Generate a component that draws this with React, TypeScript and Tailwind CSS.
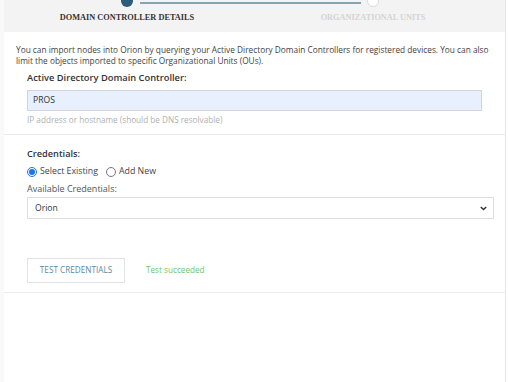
import React from "react";

const sans = { fontFamily: '"Open Sans", "Noto Sans", sans-serif' };

function Radio({ checked }: { checked: boolean }) {
  return checked ? (
    <span className="shrink-0 w-[10px] h-[10px] rounded-full border border-[#1a73e8] flex items-center justify-center bg-white">
      <span className="w-[6px] h-[6px] rounded-full bg-[#1a73e8]" />
    </span>
  ) : (
    <span className="shrink-0 block w-[10px] h-[10px] rounded-full border border-[#767676] bg-white" />
  );
}

export default function App() {
  return (
    <div className="w-[510px] h-[382px] bg-white flex overflow-hidden" style={sans}>
      <div className="w-[4px] bg-[#f9f9f9]" />
      <div className="w-[501px] flex flex-col">
        {/* Stepper header */}
        <div className="h-[32px] bg-[#f3f3f3] relative flex flex-col">
          <div className="absolute left-[136px] top-[2px] w-[221px] h-[2px] bg-[#86a4b8]" />
          <div className="grid grid-cols-[246px_246px] mt-[-5px]">
            <div className="flex justify-center">
              <span className="w-[12px] h-[12px] rounded-full bg-[#2b5c7d] relative" />
            </div>
            <div className="flex justify-center">
              <span className="w-[12px] h-[12px] rounded-full bg-white border border-[#dcdcdc] relative" />
            </div>
          </div>
          <div
            className="grid grid-cols-[246px_246px] mt-[6px] text-[8.3px] leading-[10px] font-bold uppercase"
            style={{ fontFamily: '"Liberation Serif", serif' }}
          >
            <div className="text-center text-[#333]">Domain Controller Details</div>
            <div className="text-center text-[#d4d4d4]">Organizational Units</div>
          </div>
        </div>

        {/* Intro + DC */}
        <div className="px-[12px] pt-[12px]">
          <p className="text-[8.3px] leading-[11px] text-[#3f3f3f]">
            You can import nodes into Orion by querying your Active Directory Domain Controllers for registered devices. You can also limit the objects imported to specific Organizational Units (OUs).
          </p>
          <div className="pl-[11px] pr-[11px] pt-[4px]">
            <div className="text-[9.3px] leading-[16px] font-semibold text-[#333]">
              Active Directory Domain Controller:
            </div>
            <div className="mt-[4px] h-[21px] border border-[#d4d4d4] bg-[#e8f0fe] flex items-center px-[5px] text-[8.6px] text-[#333]">
              PROS
            </div>
            <div className="mt-[3px] text-[8.2px] leading-[12px] text-[#b0b0b0]">
              IP address or hostname (should be DNS resolvable)
            </div>
          </div>
        </div>
        <div className="mt-[8px] h-[1px] bg-[#ececec]" />

        {/* Credentials */}
        <div className="pl-[23px] pr-[11px] pt-[12px]">
          <div className="text-[9.2px] leading-[14px] font-semibold text-[#333]">Credentials:</div>
          <div className="flex items-center h-[21px] text-[8.8px] text-[#444]">
            <Radio checked />
            <span className="ml-[3px]">Select Existing</span>
            <span className="ml-[8px]"><Radio checked={false} /></span>
            <span className="ml-[3px]">Add New</span>
          </div>
          <div className="text-[9px] leading-[14px] text-[#555]">Available Credentials:</div>
          <div className="mt-[1px] h-[22px] border border-[#dedede] bg-white flex items-center justify-between pl-[7px] pr-[6px] text-[8.6px] text-[#333]">
            <span>Orion</span>
            <svg width="7" height="5" viewBox="0 0 7 5">
              <path d="M0.8 0.9 L3.5 3.6 L6.2 0.9" stroke="#333" strokeWidth="1.4" fill="none" />
            </svg>
          </div>
          <div className="mt-[39px] flex items-center">
            <div className="w-[98px] h-[25px] border border-[#e3e3e3] flex items-center justify-center text-[8.2px] uppercase text-[#5b8aa3]">
              Test Credentials
            </div>
            <div className="ml-[21px] text-[8.2px] text-[#71c56d]">Test succeeded</div>
          </div>
        </div>
        <div className="mt-[9px] h-[1px] bg-[#ececec]" />
      </div>
      <div className="w-[1px] bg-[#e6e6e6]" />
      <div className="w-[4px] bg-white" />
    </div>
  );
}
